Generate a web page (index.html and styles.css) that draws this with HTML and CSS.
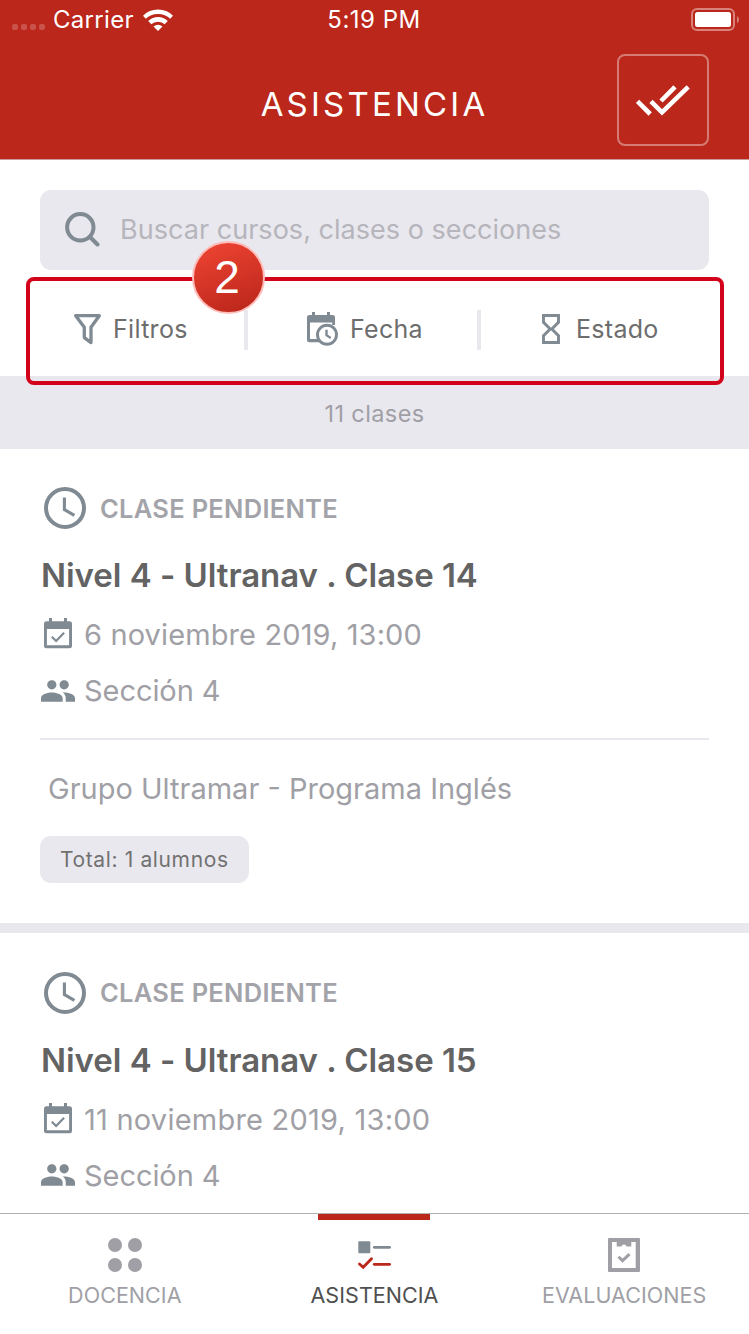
FILE: index.html
```html
<!DOCTYPE html>
<html lang="es">
<head>
<meta charset="utf-8">
<title>Asistencia</title>
<link rel="stylesheet" href="styles.css">
</head>
<body>
<svg class="defs" width="0" height="0" aria-hidden="true">
  <symbol id="clock" viewBox="0 0 42 42">
    <circle cx="21" cy="21" r="19" fill="none" stroke="#808a92" stroke-width="4"/>
    <path d="M20.400 10.500v12l10 5.800" fill="none" stroke="#808a92" stroke-width="3.100"/>
  </symbol>
  <symbol id="event" viewBox="0 0 28 32">
    <path d="M2.500 3.200H5V0h3v3.200h12V0h3v3.200h2.500a2.500 2.500 0 0 1 2.500 2.500v22a2.500 2.500 0 0 1-2.500 2.500h-23a2.500 2.500 0 0 1-2.500-2.500v-22a2.500 2.500 0 0 1 2.500-2.500zM2.900 11v16.300h22.200V11z" fill="#808a92" fill-rule="evenodd"/>
    <path d="M7.800 18.700l4.300 4.300 8-8.300" fill="none" stroke="#808a92" stroke-width="2.200"/>
  </symbol>
  <symbol id="people" viewBox="1 5 22 14">
    <path d="M16 11c1.660 0 2.990-1.340 2.990-3S17.660 5 16 5s-3 1.340-3 3 1.340 3 3 3zm-8 0c1.660 0 2.990-1.340 2.990-3S9.660 5 8 5 5 6.340 5 8s1.340 3 3 3zm0 2c-2.330 0-7 1.170-7 3.500V19h14v-2.500c0-2.330-4.670-3.500-7-3.500zm8 0c-.290 0-.620.020-.970.050 1.160.840 1.970 1.970 1.970 3.450V19h6v-2.500c0-2.330-4.670-3.500-7-3.500z" fill="#808a92"/>
  </symbol>
</svg>
<div class="screen">
  <header class="header">
    <div class="status">
      <div class="status-left">
        <span class="signal"><i></i><i></i><i></i><i></i></span>
        <span class="carrier">Carrier</span>
        <svg class="wifi" width="30" height="22" viewBox="0 0 30 22" fill="#fff">
          <path d="M0 6.800Q6 .5 15 .5T30 6.800L27.200 9.800Q22.500 5 15 5T2.800 9.800z"/>
          <path d="M5.200 12Q9.500 8 15 8T24.800 12L21.700 15.200Q19 12.700 15 12.700T8.300 15.200z"/>
          <path d="M10.500 17.400Q15 14 19.500 17.400L15 22z"/>
        </svg>
      </div>
      <span class="time">5:19 PM</span>
      <svg class="battery" width="48" height="24" viewBox="0 0 48 24">
        <rect x="1" y="1" width="42" height="21" rx="5" fill="none" stroke="#d9827b" stroke-width="2"/>
        <rect x="4" y="4" width="36" height="15" rx="2.500" fill="#fff"/>
        <path d="M46 8q2 1 2 3.500T46 15z" fill="#d9827b"/>
      </svg>
    </div>
    <div class="titlebar">
      <h1 class="title">ASISTENCIA</h1>
      <button class="check-all">
        <svg width="54" height="31" viewBox="0 0 54 31" fill="none" stroke="#fff" stroke-width="4.600">
          <path d="M1.500 16.300l12.700 12.700M15 16.300l11 11L52.200 1.800M25 16L39 1.800"/>
        </svg>
      </button>
    </div>
  </header>

  <section class="search-wrap">
    <div class="search">
      <svg width="35" height="35" viewBox="0 0 35 35" fill="none" stroke="#808a92" stroke-width="4" stroke-linecap="round">
        <circle cx="15.300" cy="15.300" r="13.200"/><path d="M25 25l7.500 7.500"/>
      </svg>
      <span class="placeholder">Buscar cursos, clases o secciones</span>
    </div>
  </section>

  <nav class="filters">
    <div class="filter filter-a">
      <svg width="27" height="31" viewBox="0 0 27 31" fill="none" stroke="#808a92" stroke-width="3.300" stroke-linejoin="round">
        <path d="M1.700 1.700H25.300L17 13.300V28.600L10.300 23.600V13.300z"/>
      </svg>
      <span>Filtros</span>
    </div>
    <div class="filter filter-b">
      <svg width="31" height="34" viewBox="0 0 31 34">
        <path d="M2.500 3H5V0h3v3h12V0h3v3h2.500A2.500 2.500 0 0 1 28 5.500V13H25.200V10.500H3V27h8.500l1.500 3.200H2.500A2.500 2.500 0 0 1 0 27.700V5.500A2.500 2.500 0 0 1 2.500 3z" fill="#808a92"/>
        <circle cx="20" cy="22.700" r="9.500" fill="#fff" stroke="#808a92" stroke-width="2.900"/>
        <path d="M19.500 17.700v5.500l4.200 2.700" fill="none" stroke="#808a92" stroke-width="2.400"/>
      </svg>
      <span>Fecha</span>
    </div>
    <div class="filter filter-c">
      <svg width="18" height="30" viewBox="0 0 18 30" fill="none" stroke="#808a92" stroke-width="2.900">
        <path d="M1.500 1.500H16.500V8.300L9.800 15l6.700 6.700V28.500H1.500V21.700L8.200 15 1.500 8.300z"/>
      </svg>
      <span>Estado</span>
    </div>
  </nav>

  <div class="count">11 clases</div>

  <main class="list">
    <article class="card">
      <div class="state"><svg width="42" height="42"><use href="#clock"/></svg><span>CLASE PENDIENTE</span></div>
      <h2 class="course">Nivel 4 - Ultranav . Clase 14</h2>
      <div class="meta date"><svg width="28" height="32"><use href="#event"/></svg><span>6 noviembre 2019, 13:00</span></div>
      <div class="meta group"><svg width="34" height="22"><use href="#people"/></svg><span>Sección 4</span></div>
      <div class="program">Grupo Ultramar - Programa Inglés</div>
      <div class="total">Total: 1 alumnos</div>
    </article>
    <article class="card">
      <div class="state"><svg width="42" height="42"><use href="#clock"/></svg><span>CLASE PENDIENTE</span></div>
      <h2 class="course">Nivel 4 - Ultranav . Clase 15</h2>
      <div class="meta date date-wide"><svg width="28" height="32"><use href="#event"/></svg><span>11 noviembre 2019, 13:00</span></div>
      <div class="meta group"><svg width="34" height="22"><use href="#people"/></svg><span>Sección 4</span></div>
    </article>
  </main>

  <footer class="tabs">
    <div class="tab">
      <svg width="34" height="34" viewBox="0 0 34 34" fill="#a09fa6">
        <circle cx="7" cy="7" r="7"/><circle cx="27" cy="7" r="7"/><circle cx="7" cy="27" r="7"/><circle cx="27" cy="27" r="7"/>
      </svg>
      <span>DOCENCIA</span>
    </div>
    <div class="tab tab-active">
      <svg width="34" height="34" viewBox="0 0 34 34">
        <rect x="1.300" y="3.300" width="12" height="12" rx="1" fill="#808a92"/>
        <path d="M17.300 9.300H32.600" stroke="#808a92" stroke-width="2.800" stroke-linecap="round"/>
        <path d="M17.300 26.300H32.600" stroke="#bb271a" stroke-width="2.800" stroke-linecap="round"/>
        <path d="M2.500 26l3.700 3.300 8.300-8.600" fill="none" stroke="#bb271a" stroke-width="2.900" stroke-linecap="round"/>
      </svg>
      <span>ASISTENCIA</span>
    </div>
    <div class="tab">
      <svg width="32" height="34" viewBox="0 0 32 34">
        <path d="M1 0H31a1 1 0 0 1 1 1V33a1 1 0 0 1-1 1H1a1 1 0 0 1-1-1V1A1 1 0 0 1 1 0zM4 4V30H27.700V4H23.300V8.500H18.500a2.600 2.600 0 0 0-5 0H8.700V4z" fill="#a09fa6" fill-rule="evenodd"/>
        <path d="M10.500 18.700l4 4 7-6.500" fill="none" stroke="#a09fa6" stroke-width="3"/>
      </svg>
      <span>EVALUACIONES</span>
    </div>
  </footer>

  <div class="highlight"></div>
  <div class="badge">2</div>
</div>
</body>
</html>
```
FILE: styles.css
```css
* { box-sizing: border-box; }
body { margin: 0; font-family: Inter, "Liberation Sans", sans-serif; background: #fff; }
svg { display: block; flex: none; }
.defs { position: absolute; }
.screen { position: relative; display: flex; flex-direction: column; width: 749px; height: 1334px; overflow: hidden; }

.header { flex: none; height: 160px; background: #bb271a; border-bottom: 1px solid #c59a97; color: #fff; }
.status { display: grid; grid-template-columns: 1fr auto 1fr; align-items: center; height: 39px; padding: 0 10px 0 12px; font-size: 24px; line-height: 39px; }
.status-left { display: flex; align-items: center; }
.signal { display: flex; gap: 3px; padding-top: 14px; margin-right: 8px; }
.signal i { width: 6px; height: 6px; border-radius: 2px; background: #c9524a; }
.carrier { letter-spacing: 0.300px; }
.wifi { margin-left: 9px; margin-top: 1px; }
.time { padding-right: 3px; letter-spacing: 0.500px; }
.battery { justify-self: end; }
.titlebar { display: grid; grid-template-columns: 1fr auto 1fr; align-items: center; height: 120px; padding: 2px 40px 0; }
.title { grid-column: 2; margin: 0; padding-top: 7px; font-size: 33px; font-weight: 400; letter-spacing: 3.200px; line-height: 40px; }
.check-all { justify-self: end; display: flex; align-items: center; justify-content: center; width: 92px; height: 92px; padding: 0; border: 2px solid #d57b74; border-radius: 8px; background: none; }

.search-wrap { flex: none; padding: 30px 40px 0; }
.search { display: flex; align-items: center; gap: 20px; height: 80px; padding: 0 0 2px 25px; border-radius: 11px; background: #e9e8ee; }
.placeholder { color: #b6b5bc; font-size: 27px; letter-spacing: 0.030px; }

.filters { flex: none; display: flex; align-items: center; height: 106px; padding: 14px 40px 0; color: #6d6d6d; font-size: 25px; letter-spacing: 0.300px; line-height: 38px; }
.filter { display: flex; align-items: center; height: 40px; padding-bottom: 2px; }
.filter + .filter { border-left: 4px solid #e9e8ee; }
.filter-a { width: 204px; padding-left: 34px; gap: 12px; }
.filter-b { width: 233px; padding-left: 59px; gap: 12px; }
.filter-c { padding-left: 61px; gap: 16px; }

.count { flex: none; height: 73px; padding-top: 2px; background: #e9e8ee; color: #a09fa6; font-size: 23.500px; letter-spacing: 0.400px; line-height: 72px; text-align: center; }

.list { flex: 1; min-height: 0; overflow: hidden; }
.card { height: 484px; padding: 38px 40px 0; border-bottom: 10px solid #e9e8ee; }
.card + .card { padding-top: 38.500px; }
.state { display: flex; align-items: center; gap: 14px; height: 42px; padding-left: 4px; color: #a3a3aa; font-size: 25.500px; font-weight: 600; letter-spacing: 0.280px; }
.course { margin: 26px 0 0 1px; color: #636363; font-size: 33px; font-weight: 600; letter-spacing: -0.040px; line-height: 40px; }
.meta { display: flex; align-items: center; color: #a09fa6; font-size: 29px; line-height: 40px; }
.date { margin-top: 20px; padding-left: 4px; gap: 12px; letter-spacing: 0.120px; }
.date svg { margin-top: -2px; }
.date-wide { letter-spacing: 0.230px; }
.group { margin-top: 16px; padding-left: 1px; gap: 9px; letter-spacing: -0.060px; }
.group svg { margin-top: -1px; }
.program { margin-top: 27px; padding: 29px 8px 0; border-top: 2px solid #e9e8ee; color: #a09fa6; font-size: 29px; line-height: 40px; }
.total { display: inline-flex; align-items: center; margin-top: 27px; height: 47px; padding: 0 20px; border-radius: 11px; background: #e9e8ee; color: #717171; font-size: 21px; letter-spacing: 0.630px; }

.tabs { flex: none; display: grid; grid-template-columns: repeat(3, 1fr); height: 121px; border-top: 1px solid #b2b1b5; background: #fff; }
.tab { display: flex; flex-direction: column; align-items: center; padding-top: 24px; color: #a09fa6; font-size: 21.500px; font-weight: 400; line-height: 30px; }
.tab span { margin-top: 8px; letter-spacing: 0.050px; }
.tab-active { justify-self: center; width: 112px; padding-top: 18px; border-top: 6px solid #bb271a; color: #4f4f4f; }

/* Callout drawn over the filter row */
.highlight { position: absolute; left: 26px; top: 277px; width: 698px; height: 108px; border: 4px solid #d3021b; border-radius: 8px; }
.badge { position: absolute; left: 192px; top: 241px; width: 73px; height: 73px; padding-right: 3px; border: 2px solid #ffbcb9; border-radius: 50%; background: linear-gradient(160deg, #f04534, #b82519); color: #fff; font-size: 46px; font-family: "Liberation Sans", sans-serif; line-height: 69px; text-align: center; }
```
